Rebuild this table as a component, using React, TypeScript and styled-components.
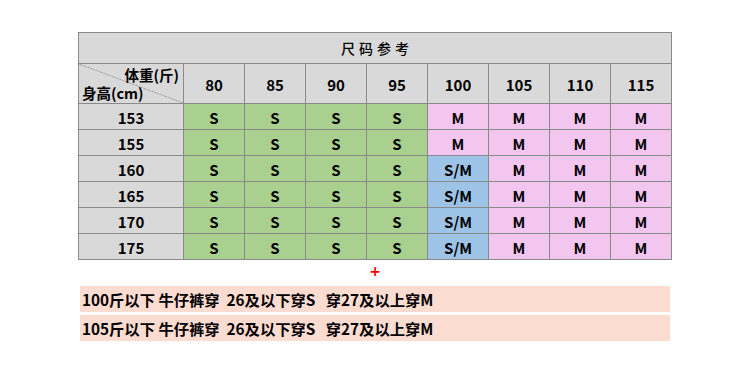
import styled, { createGlobalStyle } from 'styled-components'

const GlobalStyle = createGlobalStyle`
  body {
    margin: 0;
    background: #fff;
    font-family: "Noto Sans CJK SC", "Open Sans", sans-serif;
    color: #000;
  }
`

const Page = styled.div`
  width: 750px;
  height: 384px;
  padding: 32px 0 0 78px;
  box-sizing: border-box;
`

const Grid = styled.div`
  display: grid;
  grid-template-columns: 104px repeat(8, 60px);
  grid-template-rows: 30px 39px repeat(6, 25px);
  gap: 1px;
  padding: 1px;
  width: 594px;
  box-sizing: border-box;
  background: #8a8a8a;
`

const Title = styled.div`
  grid-column: 1 / -1;
  background: #d9d9d9;
  display: flex;
  align-items: center;
  justify-content: center;
  font-size: 14px;
  font-weight: 500;
  letter-spacing: 4px;
  padding-left: 4px;
`

const Corner = styled.div`
  background:
    linear-gradient(to top right, transparent calc(50% - 0.6px), #9a9a9a 50%, transparent calc(50% + 0.6px)),
    #d9d9d9;
  font-size: 14.5px;
  font-weight: 700;
  line-height: 18px;
  display: flex;
  flex-direction: column;
  justify-content: center;
  padding: 0 3px;
`

const CornerTop = styled.span`
  align-self: flex-end;
  padding-right: 1px;
`

const CornerBottom = styled.span`
  align-self: flex-start;
`

type Tone = 'head' | 's' | 'sm' | 'm'

const tones: Record<Tone, string> = {
  head: '#d9d9d9',
  s: '#a9d08e',
  sm: '#9dc3e6',
  m: '#f3c6ef',
}

const Cell = styled.div<{ $tone: Tone }>`
  background: ${p => tones[p.$tone]};
  display: flex;
  align-items: center;
  justify-content: center;
  padding-top: 1px;
  font-size: 15px;
  font-weight: 700;
`

const PlusRow = styled.div`
  width: 594px;
  height: 26px;
  display: flex;
  justify-content: center;
  align-items: flex-start;
`

const Plus = styled.span`
  color: #ff0000;
  font-family: "DejaVu Sans", sans-serif;
  font-size: 14px;
  font-weight: 700;
  line-height: 1;
  margin-top: 4px;
`

const Notes = styled.div`
  display: flex;
  flex-direction: column;
  gap: 3px;
  margin-left: 2px;
`

const Note = styled.div`
  width: 590px;
  height: 26px;
  background: #fcdbd0;
  display: flex;
  align-items: center;
  padding-left: 2px;
  box-sizing: border-box;
  font-size: 15.3px;
  font-weight: 700;
  white-space: pre;
`

const weights = [80, 85, 90, 95, 100, 105, 110, 115]
const heights = [153, 155, 160, 165, 170, 175]

const sizeFor = (h: number, w: number): Tone => {
  if (w <= 95) return 's'
  if (w === 100 && h >= 160) return 'sm'
  return 'm'
}

const label: Record<Tone, string> = { head: '', s: 'S', sm: 'S/M', m: 'M' }

const App = () => {
  return (
    <>
      <GlobalStyle />
      <Page>
        <Grid>
          <Title>尺码参考</Title>
          <Corner>
            <CornerTop>体重(斤)</CornerTop>
            <CornerBottom>身高(cm)</CornerBottom>
          </Corner>
          {weights.map(w => (
            <Cell key={w} $tone="head">{w}</Cell>
          ))}
          {heights.map(h => [
            <Cell key={`h${h}`} $tone="head">{h}</Cell>,
            ...weights.map(w => {
              const t = sizeFor(h, w)
              return <Cell key={`${h}-${w}`} $tone={t}>{label[t]}</Cell>
            }),
          ])}
        </Grid>
        <PlusRow>
          <Plus>+</Plus>
        </PlusRow>
        <Notes>
          <Note>{'100斤以下 牛仔裤穿  26及以下穿S   穿27及以上穿M'}</Note>
          <Note>{'105斤以下 牛仔裤穿  26及以下穿S   穿27及以上穿M'}</Note>
        </Notes>
      </Page>
    </>
  )
}

export default App
